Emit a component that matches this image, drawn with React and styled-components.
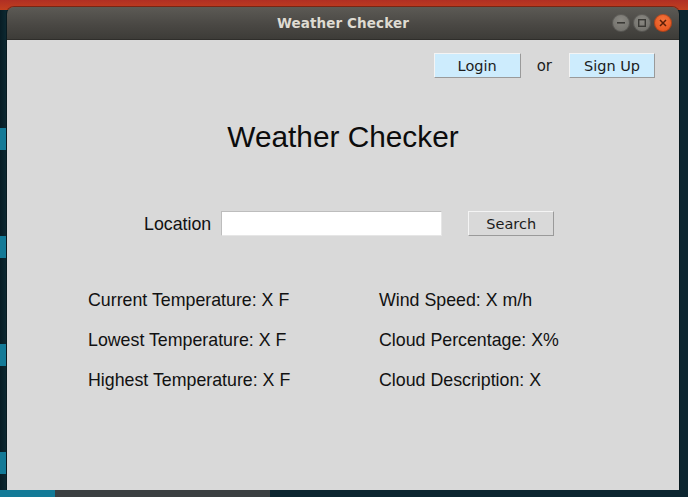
import React from 'react';
import styled, { createGlobalStyle } from 'styled-components';

const GlobalStyle = createGlobalStyle`
  html, body {
    margin: 0;
    padding: 0;
    background: #0c2630;
  }
`;

// desktop behind the window
const Desktop = styled.div`
  width: 688px;
  height: 497px;
  overflow: hidden;
  position: relative;
  box-sizing: border-box;
  padding: 7px 9px 7px 7px;
  background:
    linear-gradient(180deg, #b02f24 0px, #c2401f 10px, transparent 10px),
    linear-gradient(90deg, #071c24 0px, #0d2a33 7px, #0c2630 100%);
`;

const DeskIcon = styled.div`
  position: absolute;
  left: 0;
  top: ${(p) => p.$top}px;
  width: 6px;
  height: 22px;
  background: #137a97;
`;

const Taskbar = styled.div`
  position: absolute;
  left: 0;
  bottom: 0;
  width: 100%;
  height: 7px;
  background: linear-gradient(90deg, #137a97 0px, #137a97 55px, #3b3f41 55px, #3b3f41 270px, #0c2630 270px);
`;

const Window = styled.div`
  width: 672px;
  height: 483px;
  display: flex;
  flex-direction: column;
  border-radius: 7px 7px 0 0;
  overflow: hidden;
  box-shadow: 0 0 0 1px rgba(0, 0, 0, 0.35);
`;

const TitleBar = styled.div`
  height: 33px;
  flex: none;
  position: relative;
  display: flex;
  align-items: center;
  justify-content: center;
  background: linear-gradient(180deg, #5c5a55 0%, #4a4844 55%, #3d3c38 100%);
  border-bottom: 1px solid #2f2e2b;
  box-sizing: border-box;
`;

const Title = styled.div`
  font-family: 'DejaVu Sans', sans-serif;
  font-weight: bold;
  font-size: 13.5px;
  color: #dfdbd2;
  letter-spacing: 0.1px;
`;

const Controls = styled.div`
  position: absolute;
  right: 7px;
  top: 7px;
  display: flex;
  gap: 3px;
`;

const CtrlButton = styled.div`
  width: 18px;
  height: 18px;
  border-radius: 50%;
  display: flex;
  align-items: center;
  justify-content: center;
  background: ${(p) =>
    p.$close
      ? 'radial-gradient(circle at 50% 35%, #f4743c, #df4b16)'
      : 'radial-gradient(circle at 50% 35%, #8a8882, #6b6a65)'};
  box-shadow: inset 0 0 0 1px rgba(0, 0, 0, 0.25);
`;

const Content = styled.div`
  flex: 1;
  background: #d9d9d9;
  display: flex;
  flex-direction: column;
  font-family: 'Liberation Sans', Arial, sans-serif;
  color: #111;
`;

const AuthBar = styled.div`
  display: flex;
  justify-content: flex-end;
  align-items: center;
  padding: 13px 24px 0 0;
  gap: 16px;
`;

const TkButton = styled.button`
  width: ${(p) => p.$w}px;
  height: 25px;
  box-sizing: border-box;
  margin: 0;
  padding: 0;
  font-family: 'DejaVu Sans', sans-serif;
  font-size: 14.5px;
  color: #1c1c1c;
  background: ${(p) => (p.$blue ? '#cdecfd' : '#d9d9d9')};
  border: 1px solid;
  border-color: #f4f4f4 #9a9a9a #9a9a9a #f4f4f4;
  border-radius: 0;
  line-height: 22px;
`;

const OrText = styled.span`
  font-family: 'DejaVu Sans', sans-serif;
  font-size: 15px;
  color: #1c1c1c;
  margin-right: 1px;
`;

const Heading = styled.h1`
  margin: 42px 0 0 0;
  height: 34px;
  line-height: 34px;
  text-align: center;
  font-weight: normal;
  font-size: 29.8px;
  color: #0c0c0c;
`;

const SearchRow = styled.div`
  margin-top: 57px;
  padding-left: 137px;
  display: flex;
  align-items: center;
  height: 25px;
`;

const Label = styled.label`
  font-size: 17.8px;
  margin-right: 10px;
  position: relative;
  top: 1px;
`;

const Input = styled.input`
  width: 221px;
  height: 25px;
  box-sizing: border-box;
  margin: 0 26px 0 0;
  border: 1px solid;
  border-color: #bdbdbd #e6e6e6 #e6e6e6 #bdbdbd;
  background: #fff;
  outline: none;
`;

const Stats = styled.div`
  margin-top: 44px;
  padding-left: 81px;
  display: grid;
  grid-template-columns: 291px auto;
  grid-auto-rows: 40px;
`;

const Stat = styled.div`
  font-size: 17.8px;
  line-height: 40px;
  white-space: nowrap;
`;

const stats = [
  'Current Temperature: X F',
  'Wind Speed: X m/h',
  'Lowest Temperature: X F',
  'Cloud Percentage: X%',
  'Highest Temperature: X F',
  'Cloud Description: X',
];

const App = () => {
  return (
    <>
      <GlobalStyle />
      <Desktop>
        <DeskIcon $top={128} />
        <DeskIcon $top={236} />
        <DeskIcon $top={344} />
        <DeskIcon $top={452} />
        <Window>
          <TitleBar>
            <Title>Weather Checker</Title>
            <Controls>
              <CtrlButton>
                <svg width="8" height="2" viewBox="0 0 8 2">
                  <rect width="8" height="1.6" fill="#3a3935" />
                </svg>
              </CtrlButton>
              <CtrlButton>
                <svg width="8" height="8" viewBox="0 0 8 8">
                  <rect x="0.7" y="0.7" width="6.6" height="6.6" fill="none" stroke="#3a3935" strokeWidth="1.4" />
                </svg>
              </CtrlButton>
              <CtrlButton $close>
                <svg width="8" height="8" viewBox="0 0 8 8">
                  <path d="M1 1L7 7M7 1L1 7" stroke="#5a1e08" strokeWidth="1.5" />
                </svg>
              </CtrlButton>
            </Controls>
          </TitleBar>
          <Content>
            <AuthBar>
              <TkButton $blue $w={87}>Login</TkButton>
              <OrText>or</OrText>
              <TkButton $blue $w={86}>Sign Up</TkButton>
            </AuthBar>
            <Heading>Weather Checker</Heading>
            <SearchRow>
              <Label>Location</Label>
              <Input />
              <TkButton $w={86}>Search</TkButton>
            </SearchRow>
            <Stats>
              {stats.map((s) => (
                <Stat key={s}>{s}</Stat>
              ))}
            </Stats>
          </Content>
        </Window>
        <Taskbar />
      </Desktop>
    </>
  );
};

export default App;
